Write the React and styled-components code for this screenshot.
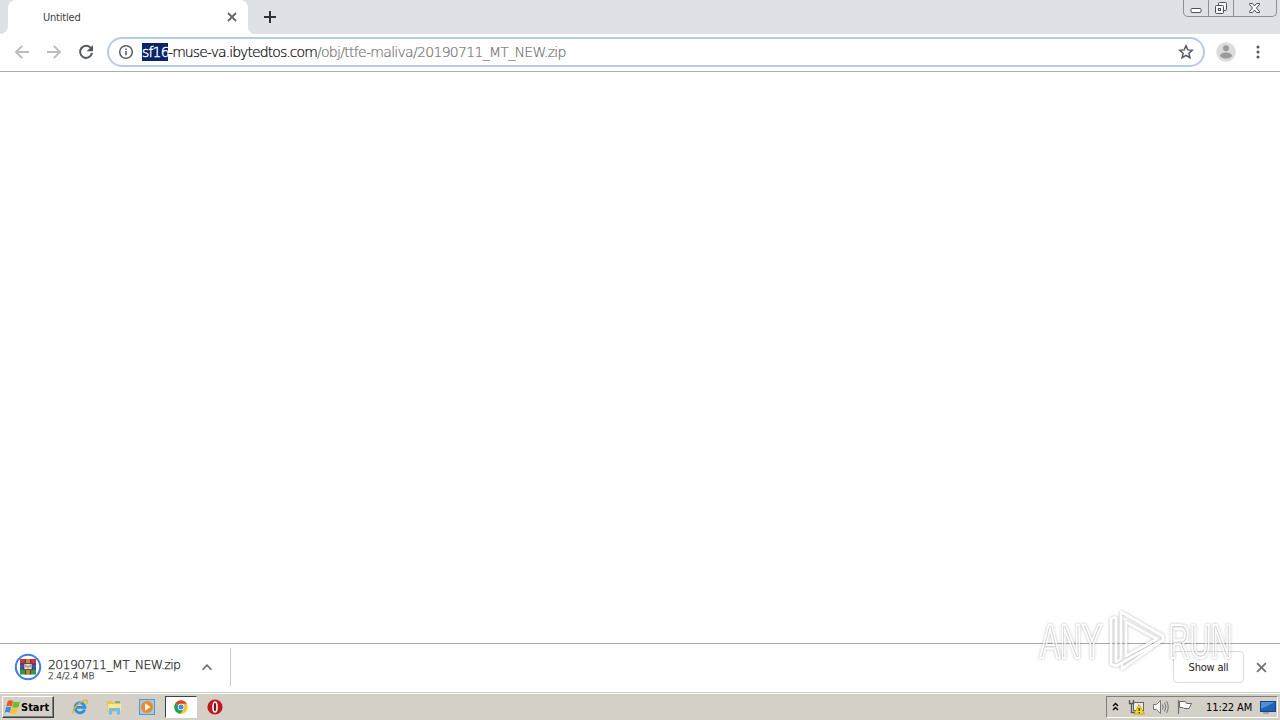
import React from "react";
import styled, { createGlobalStyle } from "styled-components";

const App = () => {
  return (
    <Screen>
      <Global />
      <TabStrip>
        <TabEdge>
          <EdgeCurve />
        </TabEdge>
        <Tab>
          <TabTitle>Untitled</TabTitle>
          <CloseIcon size={10} color="#64676b" stroke={1.8} />
        </Tab>
        <TabEnd />
        <NewTab>
          <svg width="12" height="12" viewBox="0 0 12 12">
            <path d="M6 0v12M0 6h12" stroke="#2f3236" strokeWidth="2" />
          </svg>
        </NewTab>
        <WindowButtons>
          <WinButton $w={24} $low>
            <svg width="13" height="6" viewBox="0 0 13 6">
              <rect x="1" y=".5" width="10" height="4" rx="1" fill="#fff" stroke="#4b4f57" />
            </svg>
          </WinButton>
          <WinButton $w={25}>
            <svg width="14" height="14" viewBox="0 0 14 14" fill="#f4f5f7" stroke="#4b4f57">
              <rect x="4.5" y="1.5" width="8" height="8" rx="1" />
              <rect x="1.5" y="4.5" width="8" height="8" rx="1" />
              <rect x="4.5" y="7.5" width="2" height="2" />
            </svg>
          </WinButton>
          <WinButton $w={43}>
            <svg width="13" height="12" viewBox="0 0 13 12">
              <path
                d="M1.5 1.5h3L6.5 4l2-2.5h3v1L8.5 6l3 3.5v1h-3L6.5 8l-2 2.5h-3v-1L4.5 6l-3-3.5z"
                fill="#fff"
                stroke="#4b4f57"
              />
            </svg>
          </WinButton>
        </WindowButtons>
      </TabStrip>

      <Toolbar>
        <NavButton>
          <Arrow />
        </NavButton>
        <NavButton>
          <Arrow flip />
        </NavButton>
        <NavButton>
          <svg width="16" height="16" viewBox="0 0 16 16">
            <path d="M13 4.4A6 6 0 1 0 14 8.9" fill="none" stroke="#54575b" strokeWidth="2" />
            <path d="M15 1v6.3H8.7z" fill="#54575b" />
          </svg>
        </NavButton>
        <Omnibox>
          <svg width="16" height="16" viewBox="0 0 16 16">
            <circle cx="8" cy="8" r="6.3" fill="none" stroke="#5a5d61" strokeWidth="1.5" />
            <path d="M8 7v4.3M8 4.5v1.6" stroke="#5a5d61" strokeWidth="1.6" />
          </svg>
          <Url>
            <Selected>sf16</Selected>
            <Host>-muse-va.ibytedtos.com</Host>
            <Path>/obj/ttfe-maliva/20190711_MT_NEW.zip</Path>
          </Url>
          <svg width="16" height="16" viewBox="0 0 16 16">
            <path
              d="M8 1.8l1.8 4.1 4.5.4-3.4 3 1 4.4L8 11.4l-3.9 2.3 1-4.4-3.4-3 4.5-.4z"
              fill="none"
              stroke="#54575b"
              strokeWidth="1.5"
            />
          </svg>
        </Omnibox>
        <Avatar>
          <svg width="20" height="20" viewBox="0 0 20 20">
            <circle cx="10" cy="10" r="9.8" fill="#dcdcdc" />
            <circle cx="10" cy="6.3" r="3" fill="#9b9b9b" />
            <path d="M4 14.2c0-2.4 3-3.7 6-3.7s6 1.3 6 3.7c-1.4 1.6-3.6 2.4-6 2.4s-4.6-.8-6-2.4z" fill="#9b9b9b" />
          </svg>
        </Avatar>
        <svg width="4" height="16" viewBox="0 0 4 16" fill="#54575b">
          <circle cx="2" cy="3" r="1.5" />
          <circle cx="2" cy="8" r="1.5" />
          <circle cx="2" cy="13" r="1.5" />
        </svg>
      </Toolbar>

      <Page />

      <Shelf>
        <Download>
          <ArchiveIcon />
          <FileInfo>
            <FileName>20190711_MT_NEW.zip</FileName>
            <FileSize>2.4/2.4 MB</FileSize>
          </FileInfo>
          <svg width="12" height="8" viewBox="0 0 12 8">
            <path d="M1.5 6.7L6 2.2l4.5 4.5" fill="none" stroke="#66696d" strokeWidth="1.6" />
          </svg>
        </Download>
        <ShowAll>Show all</ShowAll>
        <CloseIcon size={11} color="#707070" stroke={1.6} />
      </Shelf>

      <Taskbar>
        <StartButton>
          <WindowsFlag />
          <span>Start</span>
        </StartButton>
        <Launchers>
          <Launcher>
            <ExplorerIcon />
          </Launcher>
          <Launcher>
            <FolderIcon />
          </Launcher>
          <Launcher>
            <PlayerIcon />
          </Launcher>
          <Launcher $active>
            <ChromeIcon />
          </Launcher>
          <Launcher>
            <OperaIcon />
          </Launcher>
        </Launchers>
        <Tray>
          <svg width="7" height="11" viewBox="0 0 7 11">
            <path d="M1 4l2.5-2.5L6 4M1 8l2.5-2.5L6 8" fill="none" stroke="#000" strokeWidth="1.4" />
          </svg>
          <NetworkIcon />
          <SpeakerIcon />
          <FlagIcon />
          <Clock>11:22 AM</Clock>
          <DesktopIcon />
        </Tray>
      </Taskbar>

      <Watermark>
        <svg width="220" height="80" viewBox="0 0 220 80">
          <g fontFamily="Liberation Sans Narrow, Liberation Sans, sans-serif" fontSize="49">
            <WatermarkWord x="10" y="56" textLength="62" lengthAdjust="spacingAndGlyphs">
              ANY
            </WatermarkWord>
            <WatermarkWord x="139" y="56" textLength="63" lengthAdjust="spacingAndGlyphs">
              RUN
            </WatermarkWord>
          </g>
          <g fill="none" stroke="#fff" strokeWidth="2.6" strokeLinejoin="round">
            <path d="M86 15l-5 2v45l5 2 45-25" />
            <path d="M86 15v45l5-3V10l42 24v4L92 67v-6" />
            <path d="M96 54V20l31 17z" />
          </g>
        </svg>
      </Watermark>
    </Screen>
  );
};

export default App;

const CloseIcon = ({ size, color, stroke }) => (
  <svg width={size} height={size} viewBox="0 0 10 10">
    <path d="M1 1l8 8M9 1L1 9" stroke={color} strokeWidth={stroke} />
  </svg>
);

const Arrow = ({ flip }) => (
  <svg width="16" height="16" viewBox="0 0 16 16" transform={flip ? "scale(-1 1)" : undefined}>
    <path d="M15 8H2.5M8.2 1.8L2 8l6.2 6.2" fill="none" stroke="#b9bbbd" strokeWidth="1.9" />
  </svg>
);

const ArchiveIcon = () => (
  <svg width="28" height="28" viewBox="0 0 28 28">
    <circle cx="14" cy="14" r="12.2" fill="#fff" stroke="#3b7de0" strokeWidth="2" />
    <rect x="6" y="6" width="16" height="5" fill="#cc3340" />
    <rect x="6" y="11" width="16" height="5" fill="#3c55c8" />
    <rect x="6" y="16" width="16" height="5.5" fill="#2f9b3c" />
    <path d="M6 11h16M6 16h16" stroke="#3a2a3a" strokeWidth=".7" />
    <path d="M12 6h4v4h-4zM12 16.5h4v5h-4z" fill="#c9803c" />
    <path d="M11.5 6v15.5M16.5 6v15.5" stroke="#3a2a3a" strokeWidth=".7" />
    <rect x="10" y="10.5" width="8" height="6" fill="#f2eee4" stroke="#5a3a3a" strokeWidth=".8" />
    <path d="M12 11.5v3M14 12.5v3M16 11.5v3" stroke="#555" strokeWidth=".9" />
  </svg>
);

const WindowsFlag = () => (
  <svg width="17" height="16" viewBox="0 0 16 16">
    <path d="M3.3 2q2.5-1.7 5.2 0L7.1 7.5q-2.7-1.5-5.3 0z" fill="#e8562a" />
    <path d="M9 2.5q2.8 1.6 6.5 0L14 8q-3.2 1.5-6.4 0z" fill="#77b82c" />
    <path d="M1.5 8.3q2.5-1.3 5.2 0l-1.4 5.4q-2.5-1.6-5.2 0z" fill="#3c8ee0" />
    <path d="M7.3 8.8q2.9 1.5 6.2 0L12 14.2q-3 1.3-6.1 0z" fill="#f7c52b" />
  </svg>
);

const ExplorerIcon = () => (
  <svg width="16" height="16" viewBox="0 0 16 16" fill="none">
    <path d="M12.7 10.6A5 5 0 1 1 13 8.3H4" stroke="#2c90dd" strokeWidth="2.8" />
    <path d="M1.5 14.5C-1.5 12 8 1.5 14 1.2c2.5.3.7 3.6 0 4.4" stroke="#e3b62f" strokeWidth="1.4" />
  </svg>
);

const FolderIcon = () => (
  <svg width="16" height="16" viewBox="0 0 16 16">
    <path d="M1 2h5l1 1.5h7V13H1z" fill="#e3c55c" />
    <path d="M2 5h13v7H2z" fill="#f8e793" />
    <path d="M3 15.5V9h11v6.5h-3V12H6v3.5z" fill="#76bde4" />
    <path d="M9 3h5" stroke="#5fae62" strokeWidth="1.5" />
  </svg>
);

const PlayerIcon = () => (
  <svg width="16" height="16" viewBox="0 0 16 16">
    <rect x=".5" y=".5" width="15" height="15" fill="#9ccbeb" stroke="#5a96c7" />
    <circle cx="8" cy="8" r="6" fill="#f18a1e" />
    <path d="M6 4.3v7.4L11.5 8z" fill="#fff" />
  </svg>
);

const ChromeIcon = () => (
  <svg width="14" height="14" viewBox="0 0 14 14">
    <circle cx="7" cy="7" r="6.7" fill="#f6c52c" />
    <path d="M7 7L1.2 3.6A6.7 6.7 0 0 1 12.8 3.7H7z" fill="#dc4437" />
    <path d="M7 7L1.2 3.6A6.7 6.7 0 0 0 6.5 13.7L9.5 9z" fill="#22a05a" />
    <circle cx="7" cy="7" r="3.2" fill="#fff" />
    <circle cx="7" cy="7" r="2.5" fill="#4386ee" />
  </svg>
);

const OperaIcon = () => (
  <svg width="16" height="16" viewBox="0 0 16 16">
    <circle cx="8" cy="8" r="7.6" fill="#bd1820" />
    <ellipse cx="8" cy="8" rx="2" ry="5" fill="#8d0d14" stroke="#fff" strokeWidth="1.6" />
  </svg>
);

const NetworkIcon = () => (
  <svg width="17" height="16" viewBox="0 0 17 16">
    <rect x="5.5" y="3.5" width="10" height="8" fill="#e9e9e9" stroke="#666" />
    <path d="M1.5 1v3.5h4V1M3.5 5v8.5h5" fill="none" stroke="#555" strokeWidth="1.3" />
    <path d="M11 5.5l5.500 9.500H6z" fill="#f8d91c" stroke="#b59400" strokeWidth=".7" />
    <path d="M11.2 9v3M11.2 13v1.2" stroke="#222" strokeWidth="1.2" />
  </svg>
);

const SpeakerIcon = () => (
  <svg width="17" height="16" viewBox="0 0 17 16" fill="none" stroke="#777">
    <path d="M1.5 5.5h3l4-4v13l-4-4h-3z" fill="#f5f5f5" />
    <path d="M10.5 5.5q1.5 2.5 0 5M12.5 3.500q3 4.500 0 9M14.5 2q3.500 6 0 12" />
  </svg>
);

const FlagIcon = () => (
  <svg width="17" height="16" viewBox="0 0 17 16">
    <path d="M3.5 2.5h6l1 2h5l-2.500 5H8l-1-1H3.500z" fill="#fff" stroke="#666" />
    <path d="M2.5 1v14" stroke="#777" strokeWidth="1.3" />
  </svg>
);

const DesktopIcon = () => (
  <svg width="16" height="14" viewBox="0 0 16 14">
    <rect x=".5" y="1.5" width="15" height="10" fill="#1f62b8" stroke="#16447d" />
    <path d="M1 2h14L1 9z" fill="#4c91d8" />
    <path d="M3 13h6" stroke="#777" />
  </svg>
);

const Global = createGlobalStyle`
  body {
    margin: 0;
    overflow: hidden;
  }
  svg {
    display: block;
    flex-shrink: 0;
  }
`;

const Screen = styled.div`
  position: relative;
  display: flex;
  flex-direction: column;
  box-sizing: border-box;
  width: 1280px;
  height: 720px;
  background: #fff;
  font-family: "DejaVu Sans Condensed", "DejaVu Sans", sans-serif;
  font-stretch: condensed;
  white-space: nowrap;
`;

const TabStrip = styled.div`
  display: flex;
  height: 34px;
  background: #dee1e6;
`;

const TabEdge = styled.div`
  width: 8px;
  background: #fff;
`;

const EdgeCurve = styled.div`
  height: 100%;
  background: #dee1e6;
  border-bottom-right-radius: 8px;
`;

const Tab = styled.div`
  display: flex;
  align-items: center;
  justify-content: space-between;
  box-sizing: border-box;
  width: 240px;
  padding: 0 11px 0 35px;
  background: #fff;
  border-radius: 8px 8px 0 0;
`;

const TabTitle = styled.span`
  font-size: 11px;
  letter-spacing: -0.2px;
  color: #3c4043;
`;

const TabEnd = styled.div`
  width: 8px;
  background: radial-gradient(circle at 8px 26px, #dee1e6 8px, #fff 8.5px);
  clip-path: inset(26px 0 0 0);
`;

const NewTab = styled.div`
  display: flex;
  align-items: center;
  margin-left: 8px;
`;

const WindowButtons = styled.div`
  display: flex;
  box-sizing: border-box;
  height: 17px;
  margin: 0 3px 0 auto;
  border: 1px solid #8b8f98;
  border-top: none;
  border-radius: 0 0 5px 5px;
`;

const WinButton = styled.div`
  display: flex;
  align-items: ${(props) => (props.$low ? "flex-end" : "center")};
  justify-content: center;
  box-sizing: border-box;
  width: ${(props) => props.$w}px;
  padding-bottom: ${(props) => (props.$low ? 2 : 0)}px;
  & + & {
    border-left: 1px solid #8b8f98;
    padding-right: 1px;
  }
`;

const Toolbar = styled.div`
  display: flex;
  align-items: center;
  box-sizing: border-box;
  height: 38px;
  padding: 0 20px 1px 6px;
  border-bottom: 1px solid #adadad;
`;

const NavButton = styled.div`
  display: flex;
  justify-content: center;
  width: 32px;
`;

const Omnibox = styled.div`
  display: flex;
  align-items: center;
  box-sizing: border-box;
  width: 1098px;
  height: 30px;
  margin-left: 5px;
  padding: 0 9px;
  border: 2px solid #b3cbed;
  border-radius: 15px;
`;

const Url = styled.div`
  display: flex;
  flex: 1;
  margin-left: 8px;
  font-family: "DejaVu Sans", sans-serif;
  font-stretch: normal;
  font-weight: 200;
  font-size: 14px;
  line-height: 18px;
  -webkit-text-stroke: 0.2px;
`;

const Selected = styled.span`
  width: 26px;
  background: #0a246a;
  color: #fff;
  letter-spacing: -0.8px;
  -webkit-text-stroke: 0.4px;
`;

const Host = styled.span`
  color: #000;
  letter-spacing: -0.92px;
`;

const Path = styled.span`
  color: #707070;
  letter-spacing: -0.7px;
`;

const Avatar = styled.div`
  margin: 0 20px 0 11px;
`;

const Page = styled.div`
  flex: 1;
`;

const Shelf = styled.div`
  display: flex;
  align-items: center;
  box-sizing: border-box;
  height: 49px;
  padding: 0 13px 2px 0;
  border-top: 1px solid #a9a9a9;
`;

const Download = styled.div`
  display: flex;
  align-items: center;
  box-sizing: border-box;
  width: 231px;
  height: 38px;
  padding: 0 17px 0 14px;
  border-right: 1px solid #c9c9c9;
`;

const FileInfo = styled.div`
  display: flex;
  flex: 1;
  flex-direction: column;
  margin-left: 6px;
  padding-top: 6px;
  font-family: "DejaVu Sans", sans-serif;
  font-stretch: normal;
  font-weight: 200;
  -webkit-text-stroke: 0.25px;
`;

const FileName = styled.span`
  font-size: 12.5px;
  letter-spacing: -0.65px;
  line-height: 12px;
  color: #222;
`;

const FileSize = styled.span`
  font-size: 9px;
  letter-spacing: -0.2px;
  line-height: 10px;
  color: #333;
`;

const ShowAll = styled.div`
  display: flex;
  align-items: center;
  justify-content: center;
  box-sizing: border-box;
  width: 71px;
  height: 32px;
  margin: 0 12px 0 auto;
  border: 1px solid #dadce0;
  border-radius: 4px;
  font-size: 11px;
  letter-spacing: -0.2px;
  color: #222;
`;

const Taskbar = styled.div`
  display: flex;
  align-items: center;
  box-sizing: border-box;
  height: 28px;
  padding: 1px 0 0 2px;
  background: #d4d0c8;
  border-top: 1px solid #d4d0c8;
  box-shadow: inset 0 1px 0 #fff;
`;

const StartButton = styled.div`
  display: flex;
  align-items: center;
  box-sizing: border-box;
  width: 52px;
  height: 22px;
  padding-left: 1px;
  border: 1px solid;
  border-color: #fff #404040 #404040 #fff;
  box-shadow: inset -1px -1px 0 #808080;
  font-size: 11px;
  font-weight: bold;
`;

const Launchers = styled.div`
  display: flex;
  align-items: center;
  gap: 1px;
  margin-left: 10px;
`;

const Launcher = styled.div`
  display: flex;
  align-items: center;
  justify-content: center;
  box-sizing: border-box;
  width: 32.6px;
  height: 22px;
  ${(props) =>
    props.$active &&
    `
    background: #fff;
    border: 1px solid;
    border-color: #404040 #fff #fff #404040;
  `}
`;

const Tray = styled.div`
  display: flex;
  align-items: center;
  box-sizing: border-box;
  width: 172px;
  height: 22px;
  margin: 0 2px 0 auto;
  padding: 0 1px 0 5px;
  border: 1px solid;
  border-color: #808080 #fff #fff #808080;
  svg {
    margin-right: 7px;
  }
  svg:first-child {
    margin-right: 9px;
  }
  svg:last-child {
    margin-right: 0;
  }
`;

const Clock = styled.span`
  flex: 1;
  margin-left: 6px;
  font-size: 11px;
  letter-spacing: -0.1px;
`;

const Watermark = styled.div`
  position: absolute;
  left: 1030px;
  top: 602px;
  opacity: 0.8;
  filter: drop-shadow(0 0 1.6px rgba(0, 0, 0, 0.36));
`;

const WatermarkWord = styled.text`
  fill: none;
  stroke: #fff;
  stroke-width: 2.2px;
`;
